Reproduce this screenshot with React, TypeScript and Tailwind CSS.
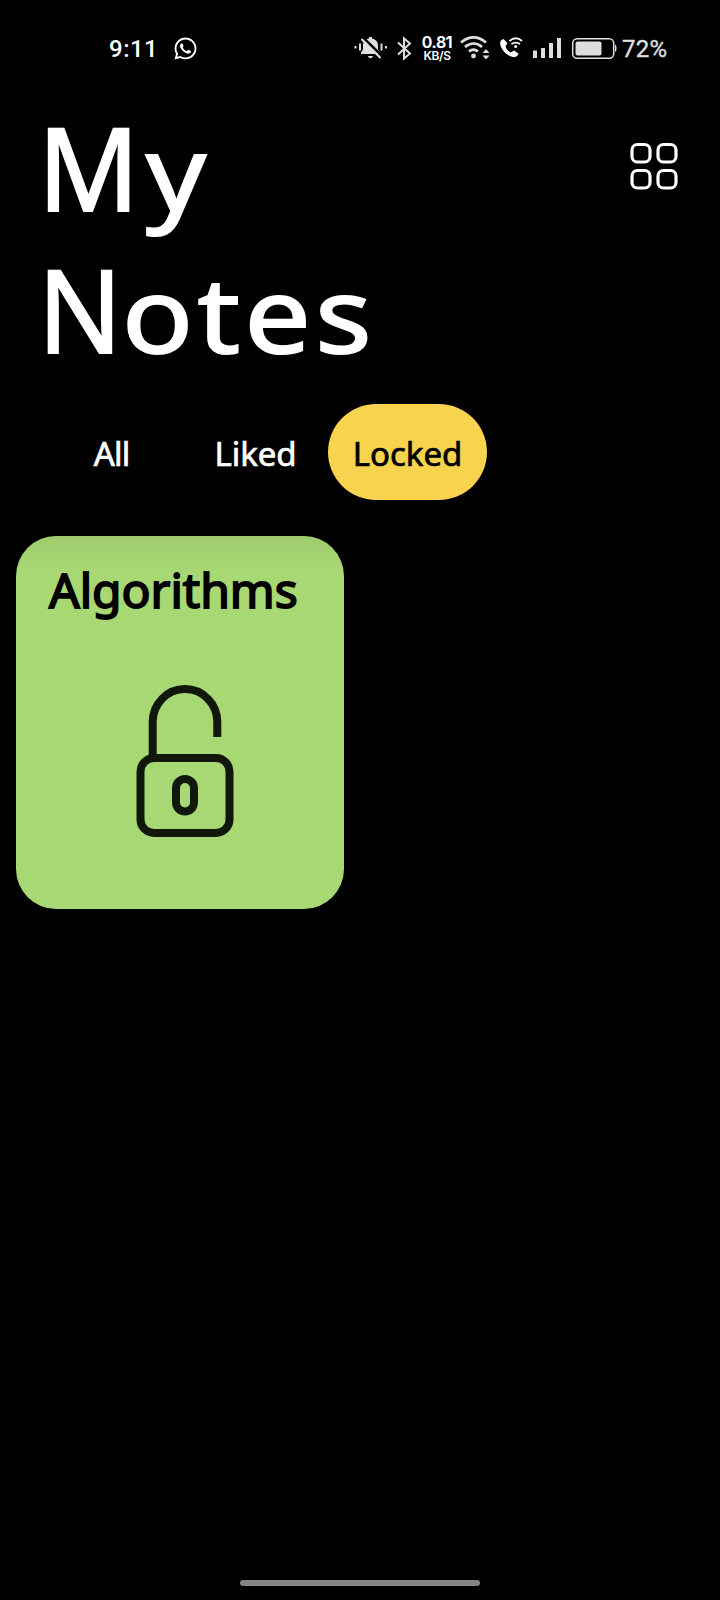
import { FaWhatsapp } from "react-icons/fa";

function StatusBar() {
  return (
    <header className="flex h-24 items-start pt-8 font-[Roboto,sans-serif] text-white">
      <div className="ml-[109px] w-[64px] pt-px text-[24px] leading-8 tracking-[0.5px] font-medium">9:11</div>
      <FaWhatsapp className="mt-1 size-[25px]" />
      <svg className="ml-[154px] h-8 w-9 text-[#dedede]" viewBox="352 32 36 32" fill="currentColor">
        <path d="M361 54v-1.500l2-3v-4c0-4 2.500-6.500 6-7v-1.500h3V38.500c4 .8 6 3.500 6 7v4l2 3V54z" />
        <path d="M368 56h5c-1 3-4 3-5 0z" />
        <path d="M363 37.500 383 57" stroke="#000" strokeWidth="2.500" />
        <path d="M361.500 39 380.500 58" stroke="currentColor" strokeWidth="2.200" />
        <path d="M355.500 46v2.500M360 43.500v7M381.500 43.500v7M386 46v2.500" stroke="currentColor" strokeWidth="2" />
      </svg>
      <svg className="ml-2 h-8 w-4 text-[#dedede]" viewBox="396 32 16 32" fill="none" stroke="currentColor" strokeWidth="2">
        <path d="m398 42.500 12 11-6 5v-20l6 5-12 11" />
      </svg>
      <div className="ml-[8px] flex w-[34px] flex-col items-center pt-[3px] font-[Inter,sans-serif] font-semibold">
        <span className="text-[16px] leading-[15px] tracking-[-0.300px] [-webkit-text-stroke:0.200px_white]">0.81</span>
        <span className="text-[12px] leading-[11px] tracking-[-0.400px]">KB/S</span>
      </div>
      <svg className="ml-[4px] h-8 w-8 text-[#dedede]" viewBox="458 32 32 32" fill="none" stroke="currentColor" strokeWidth="2.800">
        <path d="M461 42.500c8-6.500 17-6.500 25 0M465 47c5.500-4.500 12-4.500 17 0M469 51.500c3-2.500 6-2.500 9 0" />
        <circle cx="473.500" cy="56" r="2.400" fill="currentColor" stroke="none" />
        <path d="m482.500 53 3.500-4 3.500 4zM482.500 55.500h7l-3.500 4z" fill="currentColor" stroke="none" />
      </svg>
      <svg className="ml-2 h-8 w-[26px]" viewBox="498 32 26 32" fill="none" stroke="currentColor">
        <path d="M503.500 39c-4 1-4 5-2.500 8 2.500 5 6.500 9 12 10 3 .6 5-1 5.500-3.500l-4.500-3-3.500 2c-2.500-1.500-4-3.500-5-6l2-3.500z" fill="currentColor" stroke="none" />
        <path d="M509.500 41c4-3.500 8.500-3.500 12.500 0M511.500 44c3-2 5.500-2 8.500 0" strokeWidth="1.800" />
        <circle cx="515.700" cy="46.500" r="1.500" fill="currentColor" stroke="none" />
      </svg>
      <svg className="ml-2 h-8 w-8 text-[#dedede]" viewBox="532 32 32 32" fill="currentColor">
        <path d="M533 50.500h4V58h-4zM541 48h4v10h-4zM549 43h4v15h-4zM557 38h4v20h-4z" />
      </svg>
      <svg className="ml-[6px] h-8 w-[50px] text-[#dedede]" viewBox="570 32 50 32" fill="currentColor">
        <rect x="572.700" y="38.700" width="41" height="19.600" rx="4.500" fill="none" stroke="currentColor" strokeWidth="1.500" />
        <rect x="575.500" y="41.500" width="26" height="14" rx="2" />
        <path d="M615 44.500c2 .5 2 7 0 7.500z" />
      </svg>
      <div className="ml-[2px] pt-px text-[24px] leading-8 tracking-[0.200px] text-[#dedede] [-webkit-text-stroke:0.400px_#dedede]">72%</div>
    </header>
  );
}

function GridIcon() {
  return (
    <svg className="h-12 w-12" viewBox="630 142 48 48" fill="none" stroke="white" strokeWidth="3.200">
      <rect x="632" y="144.500" width="18" height="17.500" rx="5.500" />
      <rect x="658" y="144.500" width="18" height="17.500" rx="5.500" />
      <rect x="632" y="170.500" width="18" height="17.500" rx="5.500" />
      <rect x="658" y="170.500" width="18" height="17.500" rx="5.500" />
    </svg>
  );
}

function UnlockIcon() {
  return (
    <svg className="h-[154px] w-[98px]" viewBox="136 684 98 154" fill="none" stroke="#11180b" strokeWidth="8">
      <path d="M152.700 756v-34a32.300 33 0 0 1 64.600 0v15" />
      <rect x="140.500" y="758" width="89" height="75" rx="13.500" />
      <rect x="176" y="779" width="18" height="32.500" rx="9" />
    </svg>
  );
}

export default function App() {
  return (
    <div className="flex h-[1600px] w-[720px] flex-col overflow-hidden bg-black font-['Noto_Sans',sans-serif]">
      <StatusBar />
      <div className="flex h-[308px] items-start justify-between pl-[38px] pr-[42px]">
        <h1 className="flex flex-col text-[115px] leading-[142px] text-white [-webkit-text-stroke:2px_white]">
          <span>
            <span className="inline-block origin-left scale-x-[0.97] leading-none">M</span>
            <span className="ml-[4px] inline-block origin-left scale-x-[1.13] text-[104px] leading-none">y</span>
          </span>
          <span>
            <span className="inline-block origin-left scale-x-[0.96] leading-none">N</span>
            <span className="-ml-[3px] inline-block origin-left scale-x-[1.13] text-[104px] leading-none tracking-[4px]">otes</span>
          </span>
        </h1>
        <div className="mt-[46px]">
          <GridIcon />
        </div>
      </div>
      <nav className="flex h-24 items-center pl-[60px] text-[33px] text-white">
        <button className="w-[103px] pt-[3px] tracking-[-0.800px] [-webkit-text-stroke:0.700px_white]">All</button>
        <button className="ml-[41px] w-[103px] pt-[3px] tracking-[-0.100px] [-webkit-text-stroke:0.700px_white]">Liked</button>
        <button className="ml-[21px] h-24 w-[159px] rounded-full bg-[#f8d34d] pt-[3px] text-black [-webkit-text-stroke:0.700px_black]">
          Locked
        </button>
      </nav>
      <main className="flex grow px-4 pt-9">
        <article className="flex h-[373px] w-[328px] flex-col rounded-[40px] bg-[#a8d873] bg-linear-to-b from-[#9fcb6c] to-[#a8d873] to-10%">
          <h2 className="mt-[24px] ml-[33px] text-[48px] leading-[60px] text-black [-webkit-text-stroke:1.800px_black]">Algorithms</h2>
          <div className="mt-[64px] ml-[120px]">
            <UnlockIcon />
          </div>
        </article>
      </main>
      <footer className="flex h-5 justify-center">
        <div className="h-1.5 w-60 rounded-full bg-[#858585]" />
      </footer>
    </div>
  );
}
